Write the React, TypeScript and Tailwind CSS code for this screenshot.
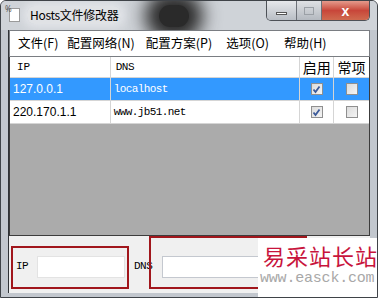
import React from 'react';

const cjk = { fontFamily: '"Noto Sans CJK SC", "Noto Sans", sans-serif' };
const mono = { fontFamily: '"Liberation Mono", "DejaVu Sans Mono", monospace' };
const sans = { fontFamily: '"Liberation Sans", Arial, sans-serif' };

const rows = [
  { ip: '127.0.0.1', dns: 'localhost', on: true, fixed: false, selected: true },
  { ip: '220.170.1.1', dns: 'www.jb51.net', on: true, fixed: false, selected: false },
];

const CheckBox: React.FC<{ checked: boolean }> = ({ checked }) => (
  <div className="w-[12px] h-[12px] border border-[#8f8f8f] bg-gradient-to-br from-[#dcdcdc] to-[#f4f4f4] flex items-center justify-center">
    {checked && (
      <svg width="9" height="9" viewBox="0 0 9 9">
        <path d="M1.5 4.5 L3.5 7 L7.5 1.5" stroke="#3b5a9a" strokeWidth="1.8" fill="none" />
      </svg>
    )}
  </div>
);

const TitleBar: React.FC = () => (
  <div className="relative overflow-hidden h-[29px] flex items-start bg-[#cfd3d8]">
    {/* dark desktop showing through the glass */}
    <div className="absolute left-[158px] top-[4px] w-[30px] h-[22px] rounded-full bg-[#2a2a2a] shadow-[0_0_18px_14px_#2a2a2a]" />
    <div className="relative flex items-center h-[28px] pl-[8px]">
      <div className="w-[11px] h-[14px] bg-white border border-[#9a9a9a] relative">
        <div className="absolute -left-[5px] -top-[4px] text-[8px] leading-none text-[#555]">%</div>
      </div>
      <span
        className="ml-[7px] text-[12px] tracking-[-0.3px] text-black px-[3px] rounded-[8px] bg-[#e4e6e9]/80 shadow-[0_0_8px_4px_rgba(232,234,237,0.75)]"
        style={cjk}
      >
        Hosts文件修改器
      </span>
    </div>
    <div className="relative ml-auto mr-[7px] flex h-[20px] border border-t-0 border-[#4d5157] rounded-b-[5px] overflow-hidden">
      <div className="w-[30px] bg-gradient-to-b from-[#e6e8eb] to-[#b9bec5] flex items-center justify-center border-r border-[#6d7178]">
        <div className="w-[11px] h-[3px] bg-white border border-[#555] mt-[6px]" />
      </div>
      <div className="w-[25px] bg-gradient-to-b from-[#dfe1e4] to-[#b4b9c0] flex items-center justify-center border-r border-[#6d7178]">
        <div className="w-[10px] h-[8px] border border-[#9ba0a6]" />
      </div>
      <div className="w-[47px] bg-gradient-to-b from-[#e49a8c] via-[#c8463a] to-[#cf6a4f] flex items-center justify-center">
        <span className="text-white text-[14px] font-bold leading-none" style={sans}>x</span>
      </div>
    </div>
  </div>
);

const Menu: React.FC = () => (
  <div className="h-[27px] bg-white border border-[#7a7d82] flex items-center pl-[8px] text-[12.5px] text-black" style={cjk}>
    <span>文件(F)</span>
    <span className="ml-[9px]">配置网络(N)</span>
    <span className="ml-[11px]">配置方案(P)</span>
    <span className="ml-[14px]">选项(O)</span>
    <span className="ml-[15px]">帮助(H)</span>
  </div>
);

const Table: React.FC = () => (
  <div className="flex-1 bg-[#ababab] border-x border-b border-[#3c3c3c] flex flex-col">
    <div className="h-[21px] bg-white flex items-stretch border-b border-[#d5d5d5]">
      <div className="w-[101px] border-r border-[#d5d5d5] flex items-center pl-[7px] text-[11px]" style={mono}>IP</div>
      <div className="w-[190px] border-r border-[#d5d5d5] flex items-center pl-[5px] text-[11px] tracking-[-0.5px]" style={mono}>DNS</div>
      <div className="w-[34px] border-r border-[#d5d5d5] flex items-center justify-center text-[14px]" style={cjk}>启用</div>
      <div className="w-[35px] flex items-center justify-center text-[14px]" style={cjk}>常项</div>
    </div>
    {rows.map((r) => (
      <div
        key={r.ip}
        className={`h-[23px] flex items-stretch border-b border-[#d5d5d5] ${r.selected ? 'bg-[#3399ff] text-white' : 'bg-white text-black'}`}
      >
        <div className="w-[101px] border-r border-[#d5d5d5] flex items-center pl-[3px] text-[12px]" style={sans}>{r.ip}</div>
        <div className="w-[190px] border-r border-[#d5d5d5] flex items-center pl-[3px] text-[11px] tracking-[-0.6px]" style={mono}>{r.dns}</div>
        <div className="w-[34px] border-r border-[#d5d5d5] flex items-center justify-center"><CheckBox checked={r.on} /></div>
        <div className="w-[35px] flex items-center justify-center"><CheckBox checked={r.fixed} /></div>
      </div>
    ))}
  </div>
);

const Bottom: React.FC = () => (
  <div className="h-[57px] bg-[#f0f0f0] flex items-center pl-[7px] pt-[4px]" style={mono}>
    <span className="text-[11px] tracking-[-0.5px] w-[21px]">IP</span>
    <div className="w-[88px] h-[22px] bg-white border border-[#e3e3e3]" />
    <span className="text-[11px] tracking-[-0.5px] ml-[9px] w-[28px]">DNS</span>
    <div className="w-[150px] h-[22px] bg-white border border-[#c4c8cf]" />
  </div>
);

export default function App() {
  return (
    <div className="relative w-[378px] h-[298px] overflow-hidden bg-[#c2c7ce] rounded-t-[6px] border border-[#3f4348]">
      <TitleBar />
      <div className="flex flex-col h-[263px] mx-[7px] border-l border-[#2f3236]">
        <Menu />
        <Table />
        <Bottom />
      </div>

      <div className="absolute left-[10px] top-[245px] w-[118px] h-[43px] border-2 border-[#a1161c]" />
      <div className="absolute left-[148px] top-[235px] w-[158px] h-[53px] border-2 border-[#a1161c]" />

      <div className="absolute left-[257px] top-[237px] w-[121px] h-[61px] bg-white flex flex-col pl-[5px] pt-[4px]">
        <span className="text-[22px] leading-[26px] tracking-[1px] text-[#c8143c]" style={cjk}>易采站长站</span>
        <span className="text-[15px] leading-[22px] text-[#a8a8a8] -ml-[3px] tracking-[-0.2px]" style={mono}>www.easck.com</span>
      </div>
    </div>
  );
}
